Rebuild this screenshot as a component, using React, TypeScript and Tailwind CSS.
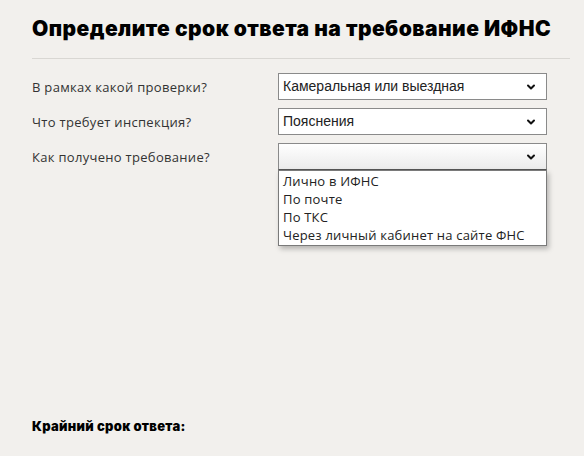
import { ChevronDown } from "lucide-react";

const ROWS = [
    { label: "В рамках какой проверки?", value: "Камеральная или выездная" },
    { label: "Что требует инспекция?", value: "Пояснения" },
    { label: "Как получено требование?", value: "", open: true },
];

const OPTIONS = ["Лично в ИФНС", "По почте", "По ТКС", "Через личный кабинет на сайте ФНС"];

function FakeSelect({ value, open }: { value: string; open?: boolean }) {
    return (
        <div className="relative w-[269px]">
            <div
                className={
                    "h-[27px] flex items-center justify-between pl-[4px] pr-[9px] border " +
                    (open
                        ? "border-[#8a8a8a] border-b-[#555] bg-gradient-to-b from-[#ffffff] to-[#ebebeb]"
                        : "border-[#8a8a8a] bg-white")
                }
            >
                <span className="text-[14px] text-[#222] font-['Liberation_Sans',Arial,sans-serif]">{value}</span>
                <ChevronDown size={12} strokeWidth={4} className="text-[#111]" />
            </div>
            {open && (
                <div className="absolute left-0 top-[27px] w-full z-10 bg-white border border-[#7a7a7a] shadow-[2px_3px_5px_rgba(0,0,0,0.25)] py-[1px]">
                    {OPTIONS.map((o) => (
                        <div key={o} className="h-[18px] leading-[18px] px-[4px] text-[13px] tracking-[0.2px] text-[#222]">
                            {o}
                        </div>
                    ))}
                </div>
            )}
        </div>
    );
}

export default function App() {
    return (
        <div className="w-[584px] h-[456px] bg-[#f2f0ed] px-8 font-['Open_Sans','Noto_Sans',sans-serif] overflow-hidden">
            {/* Header */}
            <h1 className="pt-[14px] text-[21px] leading-[30px] font-black tracking-[0.45px] text-black font-['Inter',sans-serif]">
                Определите срок ответа на требование ИФНС
            </h1>
            <div className="mt-[14px] h-px w-[538px] bg-[#d9d7d3]" />

            {/* Form */}
            <div className="mt-[14px] flex flex-col gap-[8px]">
                {ROWS.map((r) => (
                    <div key={r.label} className="flex items-center">
                        <span className="w-[246px] pt-[2px] text-[13px] tracking-[0.3px] text-[#333]">{r.label}</span>
                        <FakeSelect value={r.value} open={r.open} />
                    </div>
                ))}
            </div>

            {/* Result */}
            <p className="mt-[247px] text-[13px] font-black tracking-[0.3px] text-black font-['Inter',sans-serif]">Крайний срок ответа:</p>
        </div>
    );
}
